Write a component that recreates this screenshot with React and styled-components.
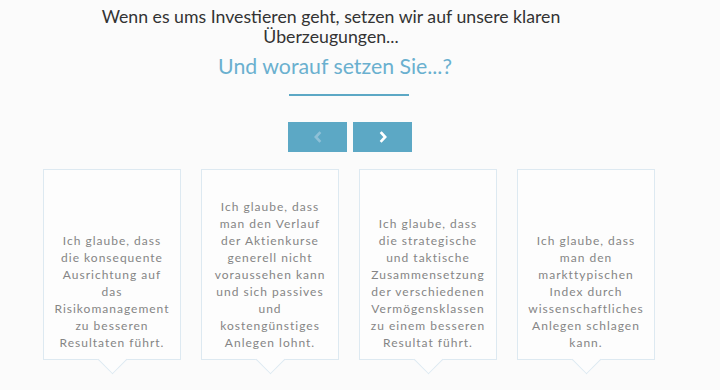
import React from "react";
import styled, { createGlobalStyle } from "styled-components";

const GlobalStyle = createGlobalStyle`
  html, body {
    margin: 0;
    padding: 0;
    background: #fbfbfb;
  }
  body {
    font-family: "Lato", "Open Sans", sans-serif;
  }
`;

const Section = styled.section`
  width: 720px;
  height: 390px;
  overflow: hidden;
  padding-top: 7px;
  box-sizing: border-box;
`;

const Heading = styled.h2`
  margin: 0 0 0 61px;
  width: 540px;
  font-size: 17.7px;
  line-height: 20px;
  font-weight: 400;
  color: #333333;
  text-align: center;
`;

const Subheading = styled.h3`
  margin: 4px 0 0 61px;
  width: 548px;
  font-size: 21.3px;
  line-height: 30px;
  font-weight: 400;
  color: #6ab0cf;
  text-align: center;
`;

const Divider = styled.hr`
  margin: 13px 0 0 289px;
  width: 120px;
  height: 2px;
  border: 0;
  background: #5ca8c5;
`;

const Pager = styled.div`
  display: flex;
  gap: 6px;
  margin: 26px 0 0 288px;
`;

const PagerButton = styled.button`
  width: 59px;
  height: 30px;
  border: 0;
  padding: 0;
  background: #5ca8c5;
  display: flex;
  align-items: center;
  justify-content: center;
  color: ${(p) => (p.disabled ? "#8ec0d7" : "#ffffff")};
  cursor: ${(p) => (p.disabled ? "default" : "pointer")};
`;

const Cards = styled.div`
  display: flex;
  gap: 20px;
  margin: 17px 0 0 43px;
`;

const Card = styled.div`
  position: relative;
  width: 138px;
  height: 191px;
  box-sizing: border-box;
  border: 1px solid #dde9f1;
  background: #fdfdfd;
  display: flex;
  align-items: flex-end;
  justify-content: center;
  padding: 0 8px 8px;

  &::after {
    content: "";
    position: absolute;
    left: 50%;
    bottom: -11px;
    width: 20px;
    height: 20px;
    margin-left: -10px;
    background: #fdfdfd;
    border-right: 1px solid #dde9f1;
    border-bottom: 1px solid #dde9f1;
    transform: rotate(45deg);
  }
`;

const CardText = styled.p`
  margin: 0;
  font-size: 12px;
  line-height: 17px;
  letter-spacing: 1px;
  color: #858585;
  text-align: center;
  position: relative;
  z-index: 1;
`;

const Chevron = ({ dir }) => (
  <svg width="10" height="12" viewBox="0 0 10 12" fill="none">
    <path
      d={dir === "left" ? "M6.5 2 L2.8 6 L6.5 10" : "M3.5 2 L7.2 6 L3.5 10"}
      stroke="currentColor"
      strokeWidth="2.6"
      strokeLinecap="square"
    />
  </svg>
);

const beliefs = [
  "Ich glaube, dass die konsequente Ausrichtung auf das Risikomanagement zu besseren Resultaten führt.",
  "Ich glaube, dass man den Verlauf der Aktienkurse generell nicht voraussehen kann und sich passives und kostengünstiges Anlegen lohnt.",
  "Ich glaube, dass die strategische und taktische Zusammensetzung der verschiedenen Vermögensklassen zu einem besseren Resultat führt.",
  "Ich glaube, dass man den markttypischen Index durch wissenschaftliches Anlegen schlagen kann.",
];

export default function App() {
  return (
    <>
      <GlobalStyle />
      <Section>
        <Heading>
          Wenn es ums Investieren geht, setzen wir auf unsere klaren Überzeugungen...
        </Heading>
        <Subheading>Und worauf setzen Sie...?</Subheading>
        <Divider />
        <Pager>
          <PagerButton disabled aria-label="zurück">
            <Chevron dir="left" />
          </PagerButton>
          <PagerButton aria-label="weiter">
            <Chevron dir="right" />
          </PagerButton>
        </Pager>
        <Cards>
          {beliefs.map((text, i) => (
            <Card key={i}>
              <CardText>{text}</CardText>
            </Card>
          ))}
        </Cards>
      </Section>
    </>
  );
}
